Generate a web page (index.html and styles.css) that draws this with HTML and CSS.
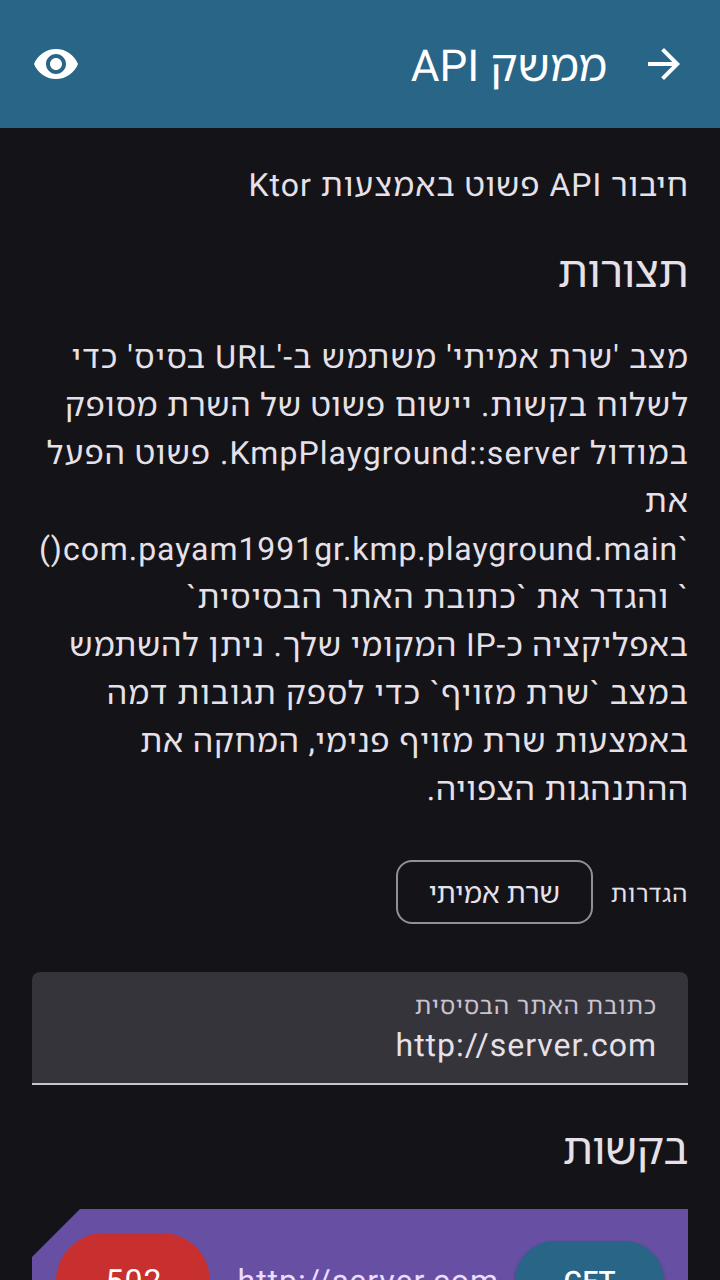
FILE: index.html
```html
<!DOCTYPE html>
<html lang="he" dir="rtl">
<head>
<meta charset="utf-8">
<title>ממשק API</title>
<link rel="stylesheet" href="styles.css">
</head>
<body>
<header class="topbar">
  <svg class="back" viewBox="0 0 24 24"><path d="M12 4l-1.41 1.41L16.17 11H4v2h12.17l-5.58 5.59L12 20l8-8z"/></svg>
  <h1 class="title">ממשק API</h1>
  <svg class="eye" viewBox="0 0 24 24"><path d="M12 4.5C7 4.5 2.73 7.61 1 12c1.73 4.39 6 7.5 11 7.5s9.27-3.11 11-7.5c-1.73-4.39-6-7.5-11-7.5zM12 17c-2.76 0-5-2.24-5-5s2.24-5 5-5 5 2.24 5 5-2.24 5-5 5zm0-8c-1.66 0-3 1.34-3 3s1.34 3 3 3 3-1.34 3-3-1.34-3-3-3z"/></svg>
</header>
<main class="content">
  <p class="intro">חיבור API פשוט באמצעות Ktor</p>
  <h2 class="heading">תצורות</h2>
  <div class="description">
    <p class="line wide">מצב 'שרת אמיתי' משתמש ב-'URL בסיס' כדי</p>
    <p class="line tight">לשלוח בקשות. יישום פשוט של השרת מסופק</p>
    <p class="line roomy">במודול KmpPlayground::server. פשוט הפעל</p>
    <p class="line">את</p>
    <p class="line code">`com.payam1991gr.kmp.playground.main()</p>
    <p class="line">` והגדר את `כתובת האתר הבסיסית`</p>
    <p class="line tight">באפליקציה כ-IP המקומי שלך. ניתן להשתמש</p>
    <p class="line roomy">במצב `שרת מזויף` כדי לספק תגובות דמה</p>
    <p class="line tight">באמצעות שרת מזויף פנימי, המחקה את</p>
    <p class="line tight">ההתנהגות הצפויה.</p>
  </div>
  <div class="settings">
    <span class="settings-label">הגדרות</span>
    <button class="chip">שרת אמיתי</button>
  </div>
  <div class="field">
    <span class="field-label">כתובת האתר הבסיסית</span>
    <span class="field-value">http://server.com</span>
  </div>
  <h2 class="heading requests">בקשות</h2>
  <div class="request">
    <span class="pill method">GET</span>
    <span class="url">http://server.com</span>
    <span class="pill status">502</span>
  </div>
</main>
</body>
</html>
```

FILE: styles.css
```css
* { box-sizing: border-box; margin: 0; }
body {
  height: 1280px;
  overflow: hidden;
  background: #141318;
  color: #e6e1e9;
  font-family: Roboto, "Noto Sans Hebrew", sans-serif;
  text-rendering: geometricPrecision;
}
.topbar {
  height: 128px;
  background: #296586;
  display: flex;
  align-items: center;
  padding: 0 32px;
  color: #fff;
}
.topbar svg { width: 48px; height: 48px; fill: currentColor; }
.title {
  flex: 1;
  margin-right: 33px;
  padding-top: 4px;
  font-size: 44px;
  font-weight: 400;
  line-height: 56px;
}
.content { height: 1152px; overflow: hidden; padding: 33px 32px 0; }
.intro, .line {
  margin-right: -1px;
  font-size: 32px;
  line-height: 48px;
  letter-spacing: 1px;
  white-space: nowrap;
}
.wide { letter-spacing: 1.14px; }
.roomy { letter-spacing: 1.06px; }
.tight { letter-spacing: .84px; }
.code { letter-spacing: .94px; }
.heading {
  margin: 35px 0 33px;
  font-size: 44px;
  font-weight: 400;
  line-height: 56px;
  letter-spacing: -.6px;
}
.settings { display: flex; align-items: center; gap: 18px; margin-top: 47px; height: 64px; }
.settings-label { padding-top: 2px; font-size: 24px; letter-spacing: .8px; }
.chip {
  width: 197px;
  height: 64px;
  padding: 0;
  border: 2px solid #938f99;
  border-radius: 16px;
  background: none;
  color: inherit;
  font-family: inherit;
  font-size: 28px;
}
.field {
  display: flex;
  flex-direction: column;
  height: 113px;
  margin-top: 48px;
  padding: 18px 31px 0 32px;
  background: #36343b;
  border-bottom: 2px solid #cac4cf;
  border-radius: 8px 8px 0 0;
}
.field-label { font-size: 24px; line-height: 32px; letter-spacing: .9px; color: #cac4cf; }
.field-value { font-size: 32px; line-height: 46px; letter-spacing: 1px; }
.requests { margin: 36px 0 32px; }
.request {
  display: flex;
  align-items: center;
  height: 144px;
  padding: 0 24px;
  background: #6750a4;
  clip-path: polygon(48px 0, 100% 0, 100% 100%, 0 100%, 0 48px);
}
.pill { display: flex; align-items: center; justify-content: center; color: #fff; }
.method {
  width: 149px;
  height: 80px;
  border-radius: 40px;
  background: #296586;
  box-shadow: 0 2px 4px rgba(0, 0, 0, .25);
  font-size: 28px;
  font-weight: 500;
}
.url { margin-right: 16px; font-size: 32px; letter-spacing: 1px; color: #eaddff; }
.status {
  width: 154px;
  height: 96px;
  margin-right: auto;
  padding-left: 2px;
  border-radius: 48px;
  background: #c83030;
  font-size: 32px;
  letter-spacing: 1px;
}
```
